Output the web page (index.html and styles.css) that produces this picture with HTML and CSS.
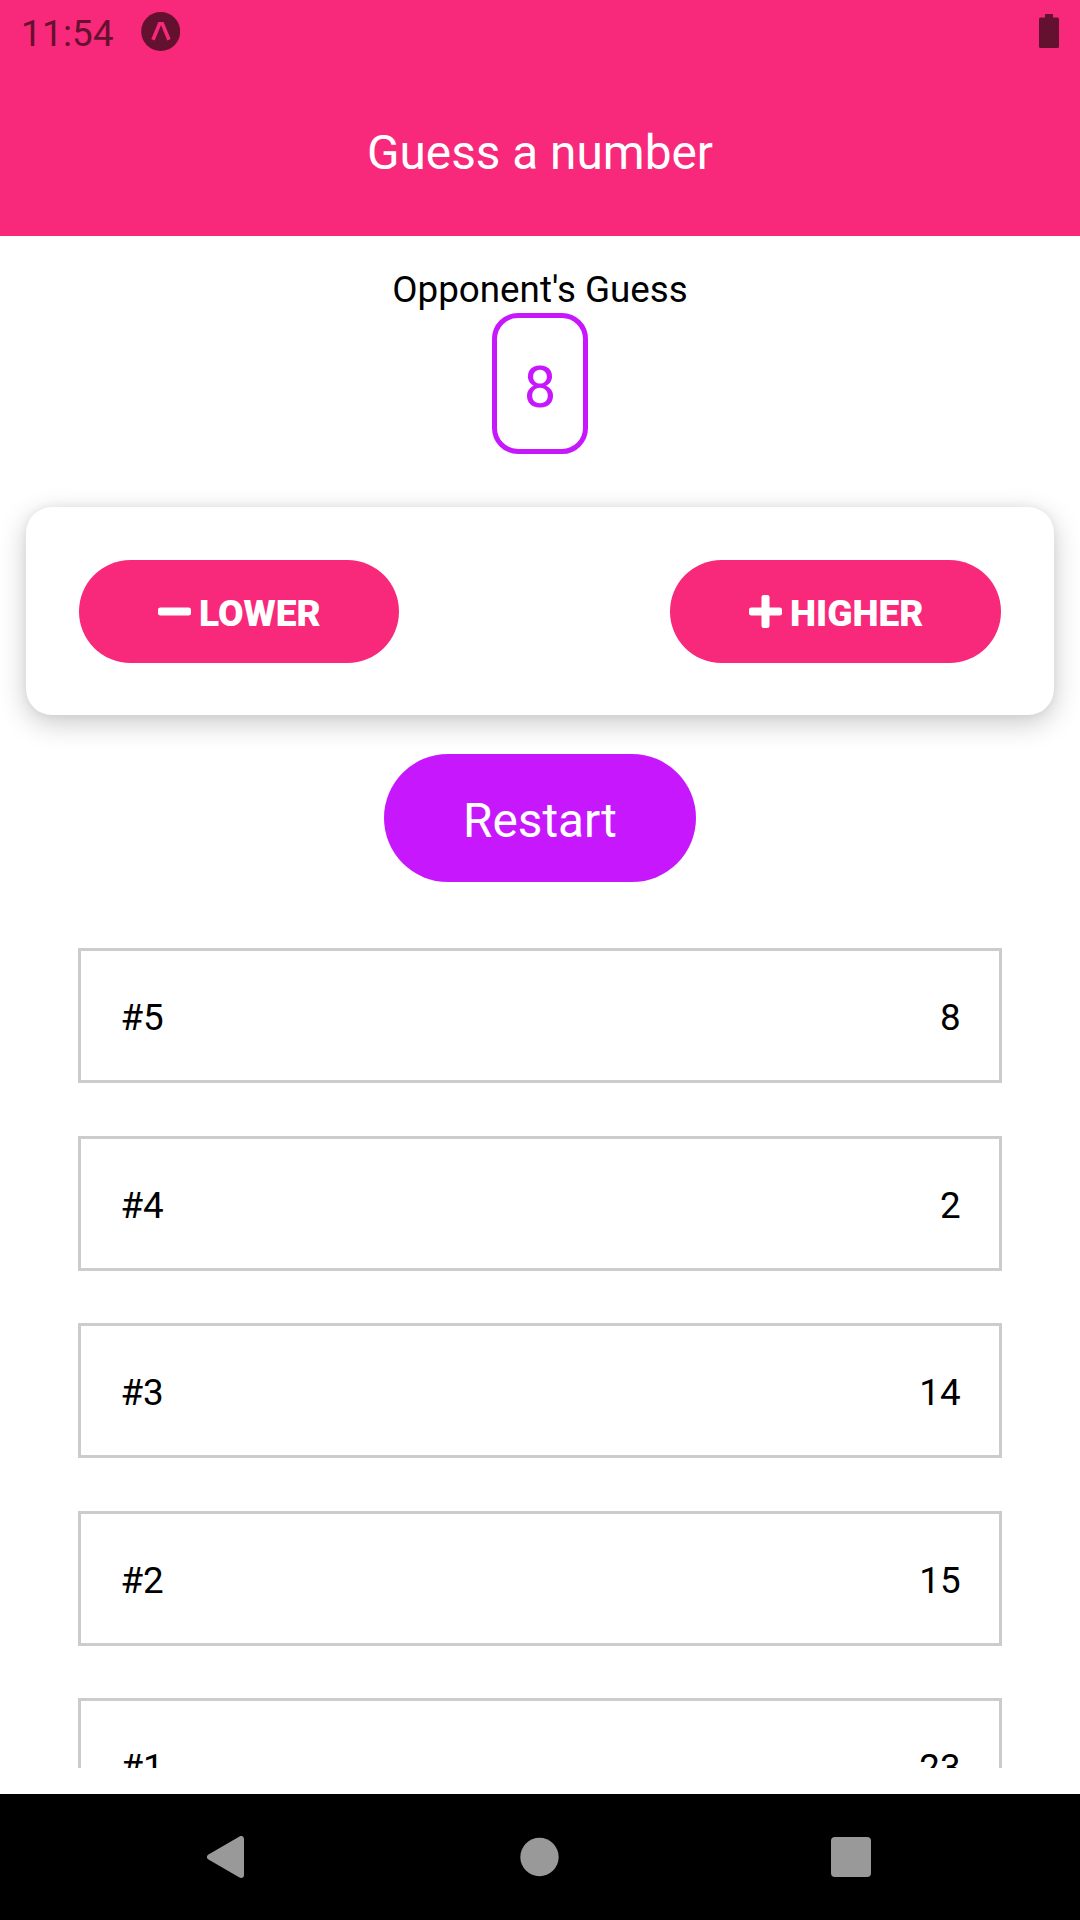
FILE: index.html
```html
<!DOCTYPE html>
<html lang="en">
<head>
<meta charset="utf-8">
<title>Guess a number</title>
<link rel="stylesheet" href="styles.css">
</head>
<body>
<div class="screen">
  <header class="header">
    <div class="status">
      <span class="time">11:54</span>
      <svg class="expo" width="39" height="39" viewBox="0 0 39 39"><circle cx="19.7" cy="19.5" r="19.5" fill="#64112f"/><path d="M12 27.800 18.600 11.800h2.800L28 27.800" fill="none" stroke="#f8287a" stroke-width="3.600"/></svg>
      <svg class="battery" width="20" height="34" viewBox="0 0 20 34"><path d="M6 0h8v3.500h4.500q1.500 0 1.500 1.500v27.500q0 1.500-1.500 1.500h-17q-1.500 0-1.500-1.500v-27.500q0-1.500 1.500-1.500H6z" fill="#64112f"/></svg>
    </div>
    <h1 class="title">Guess a number</h1>
  </header>
  <main class="game">
    <p class="label">Opponent's Guess</p>
    <div class="guess">8</div>
    <section class="card">
      <button class="btn btn-lower"><svg width="33" height="33" viewBox="0 0 33 33"><rect y="12.500" width="33" height="8" rx="2.300" fill="#fff"/></svg><span>LOWER</span></button>
      <button class="btn btn-higher"><svg width="33" height="33" viewBox="0 0 33 33"><rect y="12.500" width="33" height="8" rx="2.300" fill="#fff"/><rect x="12.500" width="8" height="33" rx="2.300" fill="#fff"/></svg><span>HIGHER</span></button>
    </section>
    <button class="restart">Restart</button>
    <ul class="rounds">
      <li class="round"><span>#5</span><span>8</span></li>
      <li class="round"><span>#4</span><span>2</span></li>
      <li class="round"><span>#3</span><span>14</span></li>
      <li class="round"><span>#2</span><span>15</span></li>
      <li class="round"><span>#1</span><span>23</span></li>
    </ul>
  </main>
  <nav class="nav">
    <svg width="40" height="42" viewBox="0 0 40 42"><path d="M3 21 34 3v36z" fill="#999" stroke="#999" stroke-width="6" stroke-linejoin="round"/></svg>
    <svg width="40" height="40" viewBox="0 0 40 40"><circle cx="20.500" cy="20" r="19.200" fill="#999"/></svg>
    <svg width="40" height="40" viewBox="0 0 40 40"><rect width="40" height="40" rx="4" fill="#999"/></svg>
  </nav>
</div>
</body>
</html>
```
FILE: styles.css
```css
* { box-sizing: border-box; }
body { margin: 0; background: #fff; font-family: Roboto, sans-serif; font-size: 36.75px; color: #000; }
h1, p, ul { margin: 0; padding: 0; font-weight: 400; }
button { border: 0; margin: 0; font-family: inherit; color: #fff; }
svg { display: block; flex: none; }
.screen { width: 1080px; height: 1920px; overflow: hidden; display: flex; flex-direction: column; }

.header { height: 236px; flex: none; background: #f8287a; display: flex; flex-direction: column; }
.status { height: 63px; padding: 0 21px; display: flex; align-items: flex-start; color: #64112f; }
.time { width: 120px; padding-top: 12px; line-height: 43px; letter-spacing: .3px; }
.expo { margin-top: 12px; }
.battery { margin: 14px 0 0 auto; }
.title { padding-top: 62px; text-align: center; font-size: 47.75px; line-height: 56px; color: #fff; }

.game { height: 1532px; flex: none; overflow: hidden; display: flex; flex-direction: column; align-items: center; padding-top: 29px; }
.label { line-height: 50px; margin-bottom: -2px; }
.guess { width: 96px; height: 141px; flex: none; border: 5px solid #c717fd; border-radius: 26px; color: #c717fd; font-size: 57.75px; line-height: 68px; text-align: center; padding-top: 35px; }
.card { width: 1028px; height: 208px; flex: none; margin-top: 53px; padding: 53px; border-radius: 26px; background: #fff; display: flex; justify-content: space-between; box-shadow: 0 8px 28px rgba(0, 0, 0, .21), 0 0 10px rgba(0, 0, 0, .06); }
.btn { height: 103px; padding: 0 0 0 79px; border-radius: 52px; background: #f8287a; display: flex; align-items: center; gap: 8px; font-size: 37.1px; font-weight: 900; line-height: 43px; }
.btn-lower { width: 320px; }
.btn-higher { width: 331px; }
.btn span { padding-top: 3px; }
.restart { width: 312px; height: 128px; flex: none; margin-top: 39px; padding: 6px 0 0; border-radius: 64px; background: #c717fd; font-size: 47.75px; line-height: 56px; }
.rounds { width: 924px; list-style: none; margin-top: 66.1px; display: flex; flex-direction: column; gap: 52.5px; }
.round { height: 135px; flex: none; border: 3px solid #ccc; padding: 45px 38.4px 0 39.4px; display: flex; justify-content: space-between; line-height: 43px; }

.nav { height: 126px; flex: none; margin-top: 26px; padding: 0 209px 0 207px; background: #000; display: flex; align-items: center; justify-content: space-between; }
```
